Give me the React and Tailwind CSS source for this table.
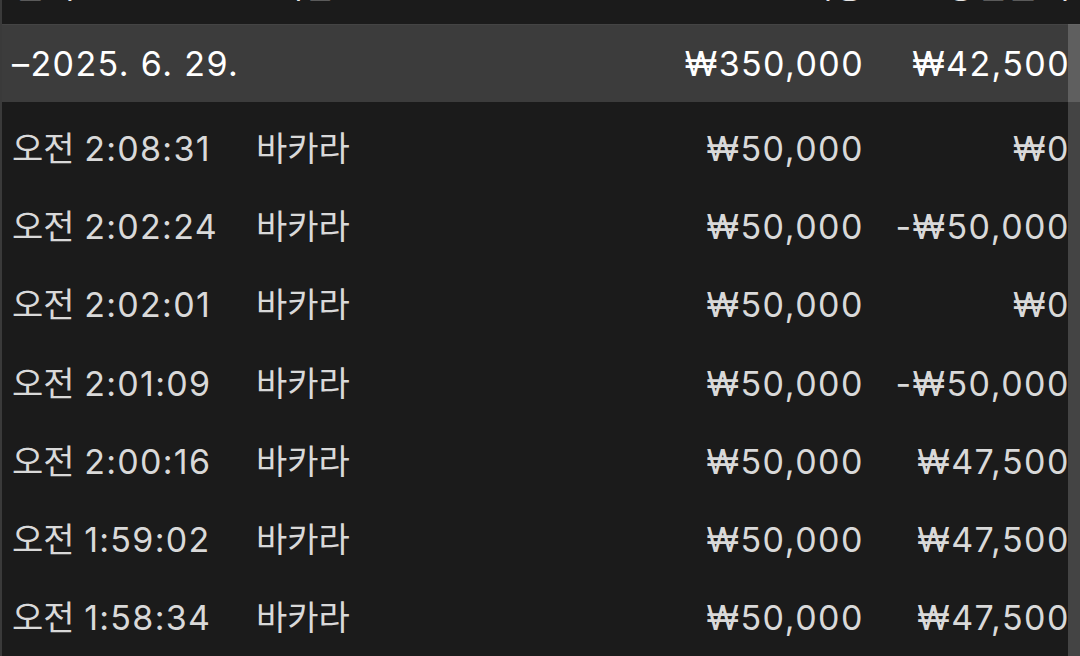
import React from 'react';

const rows = [
  { time: '2:08:31', bet: '₩50,000', win: '₩0' },
  { time: '2:02:24', bet: '₩50,000', win: '-₩50,000' },
  { time: '2:02:01', bet: '₩50,000', win: '₩0' },
  { time: '2:01:09', bet: '₩50,000', win: '-₩50,000' },
  { time: '2:00:16', bet: '₩50,000', win: '₩47,500' },
  { time: '1:59:02', bet: '₩50,000', win: '₩47,500' },
  { time: '1:58:34', bet: '₩50,000', win: '₩47,500' },
];

function App() {
  return (
    <div className="relative w-[1080px] h-[656px] overflow-hidden bg-[#1b1b1b] flex font-['Inter','Noto_Sans_CJK_KR',sans-serif] text-[34px]">
      <div className="w-[2px] shrink-0 bg-[#3a3a3a]" />
      <div className="flex-1 flex flex-col">
        {/* header, mostly scrolled off */}
        <div className="h-[24px] shrink-0 overflow-hidden text-[#e6e6e6] flex pr-[10px]">
          <div className="flex w-full -mt-[31px] leading-none">
            <span className="pl-[12px] w-[254px]">날짜</span>
            <span className="pl-[16px]">게임</span>
            <span className="ml-auto text-right">베팅</span>
            <span className="w-[206px] text-right">당첨금액</span>
          </div>
        </div>
        {/* group row */}
        <div className="h-[78px] shrink-0 bg-[#3c3c3c] border-t border-[#444444] flex items-center text-white pr-[10px] tracking-[1.4px]">
          <span className="pl-[10px]">–2025. 6. 29.</span>
          <span className="ml-auto text-right">₩350,000</span>
          <span className="w-[206px] text-right">₩42,500</span>
        </div>
        <div className="h-[7px] shrink-0" />
        {rows.map((r, i) => (
          <div key={i} className="h-[78.3px] shrink-0 flex items-center text-[#d9d9d9] pr-[10px]">
            <span className="pl-[10px] w-[254px]">
              오전 <span className="tracking-[1.3px]">{r.time}</span>
            </span>
            <span>바카라</span>
            <span className="ml-auto text-right tracking-[1.5px]">{r.bet}</span>
            <span className="w-[206px] text-right tracking-[1.5px]">{r.win}</span>
          </div>
        ))}
      </div>
      {/* scrollbar */}
      <div className="absolute right-0 top-[24px] bottom-0 w-[12px] bg-white/[0.18]" />
    </div>
  );
}

export default App;
